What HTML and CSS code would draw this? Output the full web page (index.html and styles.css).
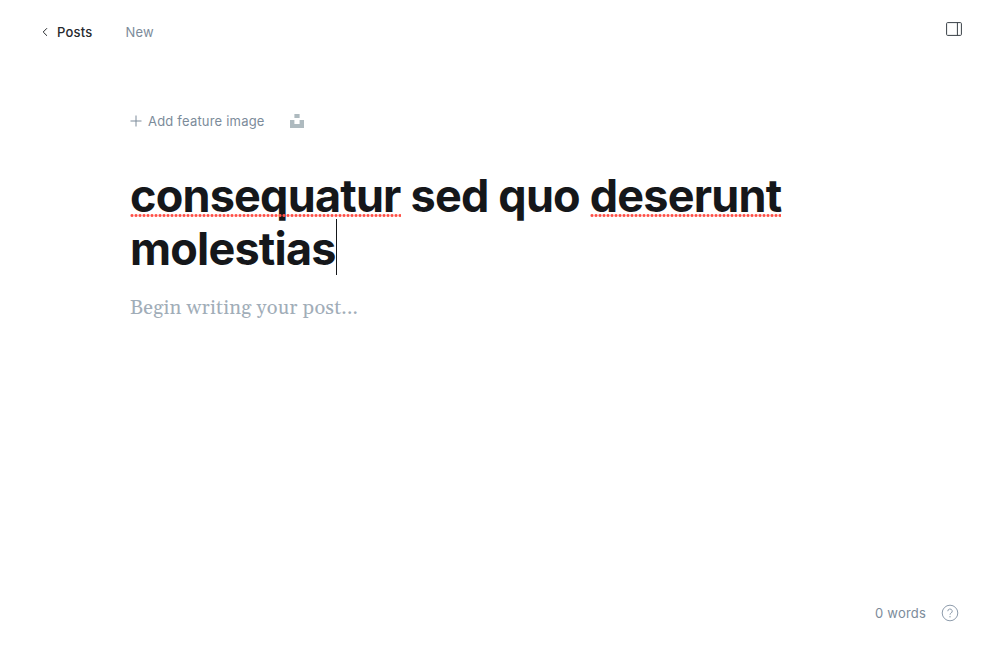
FILE: index.html
```html
<!DOCTYPE html>
<html lang="en">
<head>
<meta charset="utf-8">
<meta name="viewport" content="width=device-width, initial-scale=1">
<title>New post</title>
<link rel="stylesheet" href="styles.css">
</head>
<body>
<div class="editor">
  <header class="topbar">
    <nav class="crumbs" aria-label="Breadcrumb">
      <a class="back" href="#posts">
        <svg width="6" height="8" viewBox="0 0 6 8" aria-hidden="true"><path d="M5 .2 1.2 4 5 7.8"/></svg>
        <span>Posts</span>
      </a>
      <span class="status">New</span>
    </nav>
    <button class="icon-button" type="button" aria-label="Settings">
      <svg width="16" height="14" viewBox="0 0 16 14" aria-hidden="true"><rect x=".6" y=".6" width="14.8" height="12.8" rx="1"/><path d="M11.4.6v12.8"/></svg>
    </button>
  </header>
  <main class="canvas">
    <div class="feature">
      <button class="add-image" type="button">
        <svg width="12" height="12" viewBox="0 0 12 12" aria-hidden="true"><path d="M6 .5v11M.5 6h11"/></svg>
        <span>Add feature image</span>
      </button>
      <button class="unsplash" type="button" aria-label="Unsplash">
        <svg width="14" height="14" viewBox="0 0 14 14" aria-hidden="true"><path d="M4.4 0h5.2v3.9H4.4zM9.6 6.1H14V14H0V6.1h4.4V10h5.2z"/></svg>
      </button>
    </div>
    <h1 class="title" contenteditable="true" spellcheck="false" aria-label="Post title"><span class="misspelt">consequatur</span> sed quo <span class="misspelt">deserunt</span> molestias<span class="caret"></span></h1>
    <div class="body" contenteditable="true" role="textbox" aria-label="Post body"><p>Begin writing your post...</p></div>
  </main>
  <footer class="footer">
    <span>0 words</span>
    <a class="help" href="#help" aria-label="Help">
      <svg width="18" height="18" viewBox="0 0 18 18" aria-hidden="true"><circle cx="9" cy="9" r="7.8"/><path d="M6.8 7.2a2.2 2.2 0 1 1 3.3 1.9c-.8.4-1.1.8-1.1 1.6"/><circle class="dot" cx="9" cy="12.8" r=".7"/></svg>
    </a>
  </footer>
</div>
</body>
</html>
```
FILE: styles.css
```css
* {
  box-sizing: border-box;
}

body {
  margin: 0;
  background: #fff;
  color: #15171a;
  font: 13px/20px Inter, "Open Sans", sans-serif;
  letter-spacing: 0.2px;
}

button {
  padding: 0;
  border: 0;
  background: none;
  color: inherit;
  font: inherit;
  letter-spacing: inherit;
  cursor: pointer;
}

a {
  color: inherit;
  text-decoration: none;
}

svg {
  display: block;
  fill: none;
  stroke: currentColor;
}

.editor {
  display: flex;
  flex-direction: column;
  min-height: 100vh;
}

.topbar {
  display: flex;
  justify-content: space-between;
  align-items: flex-start;
  padding: 22px 38px 0 42px;
}

.crumbs {
  display: flex;
  gap: 33px;
}

.back {
  display: flex;
  align-items: center;
  gap: 9px;
  color: #26292d;
  font-weight: 500;
}

.status,
.feature,
.footer {
  color: #7c8b9a;
}

.icon-button {
  color: #394047;
}

.canvas {
  flex: 1;
  width: 100%;
  max-width: 740px;
  margin: 0 auto;
  padding-top: 69px;
}

.feature {
  display: flex;
  align-items: center;
  gap: 25px;
}

.add-image {
  display: flex;
  align-items: center;
  gap: 6px;
}

.unsplash svg {
  fill: #aebabf;
  stroke: none;
}

.title {
  margin: 38px 0 0;
  font-size: 45px;
  line-height: 53px;
  font-weight: 700;
  letter-spacing: -0.8px;
  outline: 0;
}

.misspelt {
  position: relative;
}

.misspelt::after {
  content: "";
  position: absolute;
  left: 0;
  right: 0;
  bottom: 6px;
  height: 3px;
  background: radial-gradient(circle at 2px 50%, #ff5148 1px, transparent 2px) 0 0 / 4px 3px;
}

.caret {
  display: inline-block;
  width: 1px;
  height: 56px;
  margin: -14px 0 0;
  vertical-align: -10px;
  background: #15171a;
}

.body {
  margin-top: 17px;
  color: #a1adb8;
  font: 20px/32px Georgia, Gelasio, "Liberation Serif", serif;
  outline: 0;
}

.body p {
  margin: 0;
}

.footer {
  display: flex;
  justify-content: flex-end;
  align-items: center;
  gap: 15px;
  padding: 0 41px 37px;
}

.help {
  color: #8e9cac;
}

.help .dot {
  fill: currentColor;
  stroke: none;
}
```
